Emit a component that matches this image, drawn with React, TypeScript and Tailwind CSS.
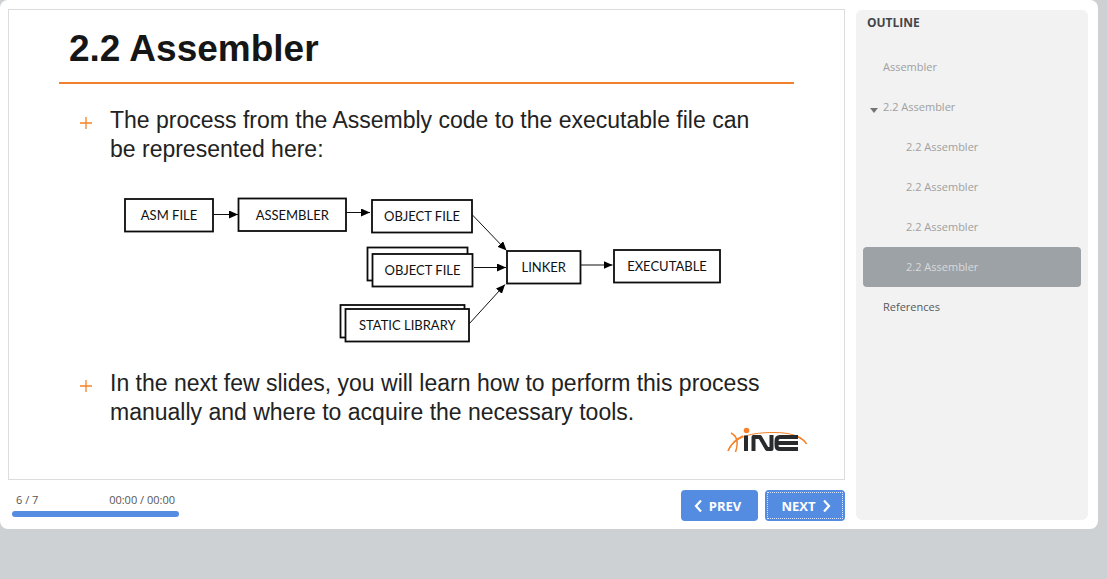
import React from 'react';

type BoxProps = { x: number; y: number; w: number; h: number; label?: string };

function Box({ x, y, w, h, label }: BoxProps) {
  return (
    <g>
      <rect x={x} y={y} width={w} height={h} fill="#fff" stroke="#0c0c0c" strokeWidth="1.8" />
      {label && (
        <text x={x + w / 2} y={y + h / 2 + 5} textAnchor="middle" fill="#111" className="font-['Lato','Noto_Sans',sans-serif] text-[13px]">
          {label}
        </text>
      )}
    </g>
  );
}

function Arrow({ x1, y1, x2, y2 }: { x1: number; y1: number; x2: number; y2: number }) {
  return <line x1={x1} y1={y1} x2={x2} y2={y2} stroke="#111" strokeWidth="1" markerEnd="url(#arrowhead)" />;
}

function Diagram() {
  return (
    <svg width="620" height="160" viewBox="110 190 620 160" role="img" aria-label="Build process" className="block max-w-full">
      <defs>
        <marker id="arrowhead" viewBox="0 0 9 8" refX="9" refY="4" markerWidth="9" markerHeight="8" markerUnits="userSpaceOnUse" orient="auto">
          <path d="M0 0L9 4L0 8Z" fill="#000" />
        </marker>
      </defs>
      <Box x={125} y={199} w={88} h={32.5} label="ASM FILE" />
      <Box x={238.5} y={198.5} w={107.5} h={32.5} label="ASSEMBLER" />
      <Box x={372} y={200} w={100} h={32.5} label="OBJECT FILE" />
      <Box x={367.5} y={247.5} w={100} h={33} />
      <Box x={372.5} y={254} w={100} h={32.5} label="OBJECT FILE" />
      <Box x={340.5} y={305} w={124} h={32.5} />
      <Box x={345.5} y={309} w={123.5} h={32.5} label="STATIC LIBRARY" />
      <Box x={507} y={251} w={73.5} h={32.5} label="LINKER" />
      <Box x={614} y={250} w={106} h={32.5} label="EXECUTABLE" />
      <Arrow x1={213} y1={214.5} x2={238} y2={214.5} />
      <Arrow x1={346} y1={212.5} x2={370} y2={212.5} />
      <Arrow x1={472} y1={214.5} x2={506.5} y2={250.5} />
      <Arrow x1={474} y1={267.5} x2={506} y2={267.5} />
      <Arrow x1={469} y1={324} x2={505} y2={284.5} />
      <Arrow x1={580} y1={265} x2={612.5} y2={265} />
    </svg>
  );
}

function Logo() {
  return (
    <svg width="84" height="28" viewBox="0 0 84 28" role="img" aria-label="INE" className="block">
      <g fill="none" stroke="#f58228">
        <path d="M2 24C9 9 26 5.500 48 5.500C64 5.500 76 9 80.500 17" strokeWidth="1" />
        <path d="M2 24C5 17 10 12 17 9" strokeWidth="1.6" />
        <path d="M5 6C11 9 12.500 16 9.500 25" strokeWidth="1.5" />
        <path d="M70 9C75 11 79 14 80.500 17" strokeWidth="1.5" />
      </g>
      <circle cx="20.500" cy="3.500" r="2.8" fill="#f58228" />
      <g fill="none" stroke="#292a2c" strokeWidth="4">
        <path d="M20 8.500V24" />
        <path d="M27.500 24V10H34L41 22H45.500V8" strokeLinejoin="round" />
        <path d="M72 10H54Q50.500 10 50.500 14V18.500Q50.500 22 54 22H72M51 16H72" />
      </g>
    </svg>
  );
}

function Bullet({ children }: { children: React.ReactNode }) {
  return (
    <div className="flex">
      <svg width="12" height="12" viewBox="0 0 12 12" aria-hidden="true" className="mt-[11px] mr-[18px] shrink-0">
        <path d="M0 6H12M6 0V12" stroke="#f58228" strokeWidth="1.3" />
      </svg>
      <p>{children}</p>
    </div>
  );
}

const outline = [
  { label: 'Assembler', level: 0, state: 'visited' },
  { label: '2.2 Assembler', level: 0, state: 'open' },
  { label: '2.2 Assembler', level: 1, state: 'visited' },
  { label: '2.2 Assembler', level: 1, state: 'visited' },
  { label: '2.2 Assembler', level: 1, state: 'visited' },
  { label: '2.2 Assembler', level: 1, state: 'current' },
  { label: 'References', level: 0, state: 'new' },
];

const tones: Record<string, string> = {
  visited: 'text-[#a0a0a0]',
  open: 'text-[#a0a0a0]',
  current: 'bg-[#9da2a6] text-[#d8dadc]',
  new: 'text-[#55585c]',
};

export default function App() {
  return (
    <div className="min-h-screen bg-[#cdd1d4] pr-[9px] font-['Open_Sans','Noto_Sans',sans-serif]">
      <div className="flex rounded-lg bg-white pt-[9px] pr-2.5 pb-2 pl-2">
        <main className="min-w-0 flex-1">
          <article className="border border-[#dcdcdc] px-[50px] pb-6 font-['Liberation_Sans',Arial,sans-serif] text-[#222]">
            <h1 className="border-b-2 border-[#f08030] pt-[17px] pb-[11px] pl-2.5 text-[37px] leading-[44px] font-bold text-[#161616]">
              2.2 Assembler
            </h1>
            <div className="pt-[22px] pr-4 pl-[21px] text-[23px] leading-[29px]">
              <Bullet>
                The process from the Assembly code to the executable file can
                <br />
                be represented here:
              </Bullet>
              <div className="mt-[26px] mb-[19px] ml-[30px]">
                <Diagram />
              </div>
              <Bullet>
                In the next few slides, you will learn how to perform this process
                <br />
                manually and where to acquire the necessary tools.
              </Bullet>
            </div>
            <div className="-mr-4 flex justify-end">
              <Logo />
            </div>
          </article>
          <footer className="mt-2.5 flex items-start justify-between">
            <div className="ml-1 w-[167px] pt-[2px] text-[11px] text-[#555]">
              <div className="flex justify-between px-1 leading-4">
                <span>6 / 7</span>
                <span>00:00 / 00:00</span>
              </div>
              <div className="mt-[3px] h-1.5 rounded-sm bg-[#538ce1]" />
            </div>
            <div className="flex gap-[7px] text-[13px] font-bold text-white">
              <button type="button" className="flex h-[31px] w-[77px] items-center justify-center gap-[7px] rounded bg-[#538ce1] pt-0.5 pr-1">
                <svg width="8" height="12" viewBox="0 0 8 12" aria-hidden="true" fill="none" stroke="#fff" strokeWidth="2.2" className="-mt-0.5">
                  <path d="M7 0.500L2 6L7 11.500" />
                </svg>
                PREV
              </button>
              <button type="button" className="flex h-[31px] w-20 rounded bg-[#538ce1] p-0.5">
                <span className="flex h-full w-full items-center justify-center gap-[7px] border border-dotted border-white/80 pt-0.5 pl-0.5">
                  NEXT
                  <svg width="8" height="12" viewBox="0 0 8 12" aria-hidden="true" fill="none" stroke="#fff" strokeWidth="2.2" className="-mt-0.5">
                    <path d="M1 0.500L6 6L1 11.500" />
                  </svg>
                </span>
              </button>
            </div>
          </footer>
        </main>
        <aside className="mt-px mb-px ml-[11px] w-[232px] shrink-0 rounded-md bg-[#f2f2f2] px-[7px]">
          <h2 className="pt-[5px] pl-1 text-[12px] leading-4 font-bold text-[#444649]">OUTLINE</h2>
          <nav aria-label="Outline" className="mt-4">
            {outline.map((item, i) => (
              <a
                key={i}
                href="#"
                className={`relative flex h-10 items-center rounded text-[11px] ${item.level ? 'pl-[43px]' : 'pl-5'} ${tones[item.state]}`}
              >
                {item.state === 'open' && (
                  <svg width="8" height="5" viewBox="0 0 8 5" aria-hidden="true" className="absolute top-[21px] left-[7px]">
                    <path d="M0 0H8L4 5Z" fill="#747474" />
                  </svg>
                )}
                {item.label}
              </a>
            ))}
          </nav>
        </aside>
      </div>
    </div>
  );
}
